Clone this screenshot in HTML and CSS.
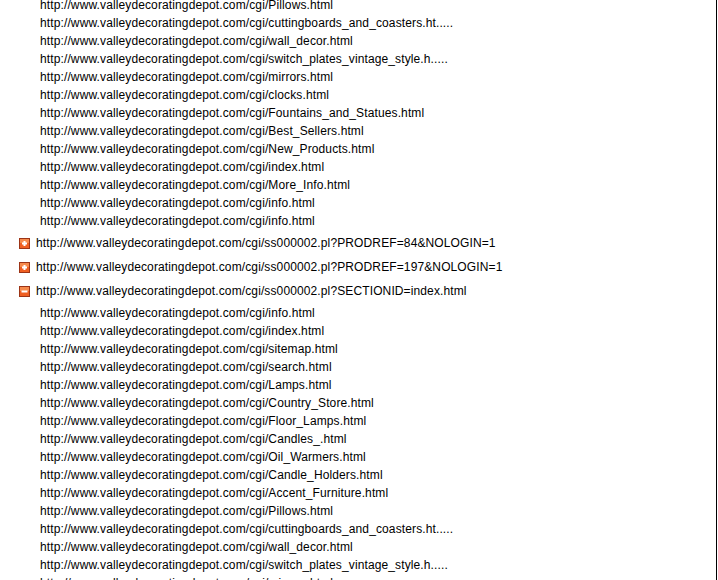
FILE: index.html
```html
<!DOCTYPE html>
<html lang="en">
<head>
    <meta charset="UTF-8">
    <title>Site Map Tree</title>
    <link rel="stylesheet" href="styles.css">
</head>
<body>
    <div class="pane">
        <div class="tree">
            <ul class="links">
                <li>http://www.valleydecoratingdepot.com/cgi/Pillows.html</li>
                <li>http://www.valleydecoratingdepot.com/cgi/cuttingboards_and_coasters.ht.....</li>
                <li>http://www.valleydecoratingdepot.com/cgi/wall_decor.html</li>
                <li>http://www.valleydecoratingdepot.com/cgi/switch_plates_vintage_style.h.....</li>
                <li>http://www.valleydecoratingdepot.com/cgi/mirrors.html</li>
                <li>http://www.valleydecoratingdepot.com/cgi/clocks.html</li>
                <li>http://www.valleydecoratingdepot.com/cgi/Fountains_and_Statues.html</li>
                <li>http://www.valleydecoratingdepot.com/cgi/Best_Sellers.html</li>
                <li>http://www.valleydecoratingdepot.com/cgi/New_Products.html</li>
                <li>http://www.valleydecoratingdepot.com/cgi/index.html</li>
                <li>http://www.valleydecoratingdepot.com/cgi/More_Info.html</li>
                <li>http://www.valleydecoratingdepot.com/cgi/info.html</li>
                <li>http://www.valleydecoratingdepot.com/cgi/info.html</li>
            </ul>

            <div class="node">
                <svg class="toggle" width="11" height="11" viewBox="0 0 11 11">
                    <rect x="0.5" y="0.5" width="10" height="10" fill="#ef5f22" stroke="#9c3416"/>
                    <rect x="1" y="1" width="9" height="4" fill="#f68a4c"/>
                    <rect x="3" y="4.5" width="5" height="2" fill="#fff"/>
                    <rect x="4.5" y="3" width="2" height="5" fill="#fff"/>
                </svg>
                <span>http://www.valleydecoratingdepot.com/cgi/ss000002.pl?PRODREF=84&amp;NOLOGIN=1</span>
            </div>
            <div class="node">
                <svg class="toggle" width="11" height="11" viewBox="0 0 11 11">
                    <rect x="0.5" y="0.5" width="10" height="10" fill="#ef5f22" stroke="#9c3416"/>
                    <rect x="1" y="1" width="9" height="4" fill="#f68a4c"/>
                    <rect x="3" y="4.5" width="5" height="2" fill="#fff"/>
                    <rect x="4.5" y="3" width="2" height="5" fill="#fff"/>
                </svg>
                <span>http://www.valleydecoratingdepot.com/cgi/ss000002.pl?PRODREF=197&amp;NOLOGIN=1</span>
            </div>
            <div class="node">
                <svg class="toggle" width="11" height="11" viewBox="0 0 11 11">
                    <rect x="0.5" y="0.5" width="10" height="10" fill="#ef5f22" stroke="#9c3416"/>
                    <rect x="1" y="1" width="9" height="4" fill="#f68a4c"/>
                    <rect x="2.5" y="4.5" width="6" height="2" fill="#fff"/>
                </svg>
                <span>http://www.valleydecoratingdepot.com/cgi/ss000002.pl?SECTIONID=index.html</span>
            </div>

            <ul class="links">
                <li>http://www.valleydecoratingdepot.com/cgi/info.html</li>
                <li>http://www.valleydecoratingdepot.com/cgi/index.html</li>
                <li>http://www.valleydecoratingdepot.com/cgi/sitemap.html</li>
                <li>http://www.valleydecoratingdepot.com/cgi/search.html</li>
                <li>http://www.valleydecoratingdepot.com/cgi/Lamps.html</li>
                <li>http://www.valleydecoratingdepot.com/cgi/Country_Store.html</li>
                <li>http://www.valleydecoratingdepot.com/cgi/Floor_Lamps.html</li>
                <li>http://www.valleydecoratingdepot.com/cgi/Candles_.html</li>
                <li>http://www.valleydecoratingdepot.com/cgi/Oil_Warmers.html</li>
                <li>http://www.valleydecoratingdepot.com/cgi/Candle_Holders.html</li>
                <li>http://www.valleydecoratingdepot.com/cgi/Accent_Furniture.html</li>
                <li>http://www.valleydecoratingdepot.com/cgi/Pillows.html</li>
                <li>http://www.valleydecoratingdepot.com/cgi/cuttingboards_and_coasters.ht.....</li>
                <li>http://www.valleydecoratingdepot.com/cgi/wall_decor.html</li>
                <li>http://www.valleydecoratingdepot.com/cgi/switch_plates_vintage_style.h.....</li>
                <li>http://www.valleydecoratingdepot.com/cgi/mirrors.html</li>
            </ul>
        </div>
    </div>
</body>
</html>
```

FILE: styles.css
```css
html, body {
    height: 100%;
}
body {
    margin: 0;
    background-color: #fff;
    color: #000;
    font-family: 'Liberation Sans', Arial, sans-serif;
    font-size: 12px;
    letter-spacing: 0.12px;
    overflow: hidden;
}
.pane {
    box-sizing: border-box;
    width: 717px;
    height: 100%;
    border-right: 1px solid #000;
    overflow: hidden;
}
.tree {
    margin-top: -4px;
}
.links {
    list-style: none;
    margin: 0;
    padding: 0 0 0 40px;
}
.links li {
    height: 18px;
    line-height: 18px;
    white-space: nowrap;
}
.node {
    display: flex;
    align-items: center;
    height: 22px;
    margin: 2px 0;
    padding-left: 19px;
    white-space: nowrap;
}
.toggle {
    flex: none;
    margin-right: 6px;
}
```
